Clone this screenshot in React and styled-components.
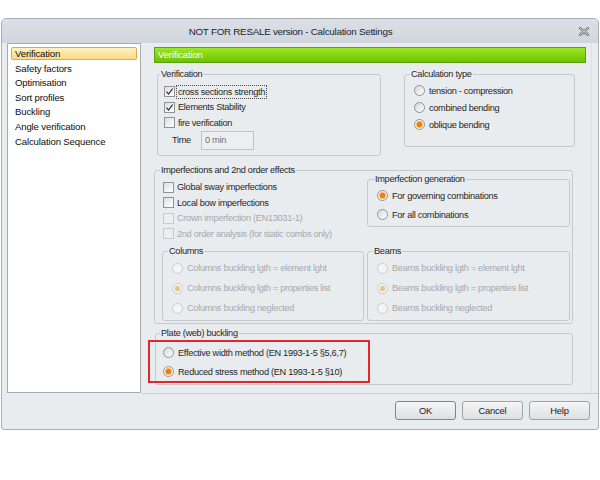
import React from "react";
import styled, { createGlobalStyle } from "styled-components";

const GlobalStyle = createGlobalStyle`
  html, body { margin: 0; padding: 0; background: #ffffff; }
  body {
    font-family: "Liberation Sans", Arial, sans-serif;
    color: #222;
  }
`;

const SIDE_ITEMS = [
  "Verification",
  "Safety factors",
  "Optimisation",
  "Sort profiles",
  "Buckling",
  "Angle verification",
  "Calculation Sequence",
];

const CheckItem = ({ checked, disabled, focus, children }) => (
  <Row $h={15.5}>
    <CheckBox $disabled={disabled}>
      {checked && (
        <svg width="9" height="9" viewBox="0 0 9 9">
          <path d="M1.5 4.6 L3.6 7 L7.6 1.6" fill="none" stroke="#2b2b2b" strokeWidth="1.1" />
        </svg>
      )}
    </CheckBox>
    <Label $disabled={disabled} $focus={focus}>{children}</Label>
  </Row>
);

const RadioItem = ({ checked, disabled, h = 19, children }) => (
  <Row $h={h}>
    <RadioDot $checked={checked} $disabled={disabled} />
    <Label $disabled={disabled}>{children}</Label>
  </Row>
);

const App = () => (
  <Page>
    <GlobalStyle />
    <Window>
      <TitleBar>
        <TitleText>NOT FOR RESALE version - Calculation Settings</TitleText>
        <CloseIcon width="10" height="9" viewBox="0 0 10 9">
          <path d="M1 1 L9 8 M9 1 L1 8" stroke="#6f757c" strokeWidth="2.6" strokeLinecap="round" />
          <path d="M1 1 L9 8 M9 1 L1 8" stroke="#eef0f3" strokeWidth="1" strokeLinecap="round" />
        </CloseIcon>
      </TitleBar>

      <Body>
        <Sidebar>
          {SIDE_ITEMS.map((item, i) => (
            <SideItem key={item} $active={i === 0}>{item}</SideItem>
          ))}
        </Sidebar>

        <Main>
          <Header>Verification</Header>

          <TopRow>
            <Group $w={224} $h={87}>
              <Legend $ml={2}>Verification</Legend>
              <GroupBody $pt={4} $pl={5}>
                <CheckItem checked focus>cross sections strength</CheckItem>
                <CheckItem checked>Elements Stability</CheckItem>
                <CheckItem>fire verification</CheckItem>
                <TimeRow>
                  <TimeLabel>Time</TimeLabel>
                  <TimeInput>0 min</TimeInput>
                </TimeRow>
              </GroupBody>
            </Group>

            <Group $w={171} $h={78}>
              <Legend>Calculation type</Legend>
              <GroupBody $pt={2} $pl={9}>
                <RadioItem h={17}>tension - compression</RadioItem>
                <RadioItem h={17}>combined bending</RadioItem>
                <RadioItem h={17} checked>oblique bending</RadioItem>
              </GroupBody>
            </Group>
          </TopRow>

          <Group $w={419} $h={159} $mt={9}>
            <Legend>Imperfections and 2nd order effects</Legend>
            <GroupBody $pl={7}>
              <SplitRow>
                <CheckColumn>
                  <CheckItem>Global sway imperfections</CheckItem>
                  <CheckItem>Local bow imperfections</CheckItem>
                  <CheckItem disabled>Crown imperfection (EN13031-1)</CheckItem>
                  <CheckItem disabled>2nd order analysis (for static combs only)</CheckItem>
                </CheckColumn>
                <Group $w={203} $h={53} $mt={-2}>
                  <Legend $ml={6}>Imperfection generation</Legend>
                  <GroupBody $pt={1} $pl={9}>
                    <RadioItem checked>For governing combinations</RadioItem>
                    <RadioItem>For all combinations</RadioItem>
                  </GroupBody>
                </Group>
              </SplitRow>

              <PairRow>
                <Group $w={202} $h={75}>
                  <Legend>Columns</Legend>
                  <GroupBody $pt={1} $pl={9}>
                    <RadioItem h={20} disabled>Columns buckling lgth = element lght</RadioItem>
                    <RadioItem h={20} disabled checked>Columns buckling lgth = properties list</RadioItem>
                    <RadioItem h={20} disabled>Columns buckling neglected</RadioItem>
                  </GroupBody>
                </Group>
                <Group $w={203} $h={75}>
                  <Legend>Beams</Legend>
                  <GroupBody $pt={1} $pl={9}>
                    <RadioItem h={20} disabled>Beams buckling lgth = element lght</RadioItem>
                    <RadioItem h={20} disabled checked>Beams buckling lgth = properties list</RadioItem>
                    <RadioItem h={20} disabled>Beams buckling neglected</RadioItem>
                  </GroupBody>
                </Group>
              </PairRow>
            </GroupBody>
          </Group>

          <Group $w={418} $h={57} $mt={4} $ml={1}>
            <Legend $ml={4}>Plate (web) buckling</Legend>
            <GroupBody>
              <Highlight>
                <RadioItem>Effective width method (EN 1993-1-5 §5,6,7)</RadioItem>
                <RadioItem checked>Reduced stress method (EN 1993-1-5 §10)</RadioItem>
              </Highlight>
            </GroupBody>
          </Group>
        </Main>
      </Body>

      <Footer>
        <Button $default>OK</Button>
        <Button>Cancel</Button>
        <Button>Help</Button>
      </Footer>
    </Window>
  </Page>
);

export default App;

const Page = styled.div`
  width: 600px;
  height: 480px;
  box-sizing: border-box;
  padding: 18px 0 0 1px;
`;

const Window = styled.div`
  width: 598px;
  height: 412px;
  box-sizing: border-box;
  border: 1px solid #a9afb7;
  border-radius: 5px 5px 3px 3px;
  background: #e9ecef;
  display: flex;
  flex-direction: column;
  overflow: hidden;
`;

const TitleBar = styled.div`
  height: 24px;
  flex: none;
  display: flex;
  align-items: center;
  background: linear-gradient(#dce0e6, #d0d5dc);
`;

const TitleText = styled.div`
  flex: 1;
  text-align: center;
  font-size: 9.8px;
  letter-spacing: -0.25px;
  color: #1b2230;
  padding-top: 1px;
`;

const CloseIcon = styled.svg`
  flex: none;
  margin: 1px 9px 0 0;
`;

const Body = styled.div`
  height: 350px;
  flex: none;
  display: flex;
`;

const Sidebar = styled.div`
  width: 134px;
  height: 350px;
  margin-left: 5px;
  box-sizing: border-box;
  border: 1px solid #a6abb2;
  background: #ffffff;
  padding: 3px;
`;

const SideItem = styled.div`
  height: 13px;
  box-sizing: border-box;
  margin-bottom: 1.6px;
  padding-left: 3px;
  border: 1px solid ${p => (p.$active ? "#e2a93f" : "transparent")};
  border-radius: 2px;
  background: ${p => (p.$active ? "linear-gradient(#fff1c4, #fdd983)" : "transparent")};
  font-size: 9.6px;
  letter-spacing: -0.15px;
  line-height: 11px;
  color: #0e0e0e;
  white-space: nowrap;
`;

const Main = styled.div`
  flex: 1;
  padding: 4px 0 0 13px;
  box-sizing: border-box;
  border-right: 1px solid #dde0e4;
  margin-right: 6px;
`;

const Header = styled.div`
  width: 432px;
  height: 16px;
  box-sizing: border-box;
  border: 1px solid #5a9f0c;
  background: linear-gradient(#9ce823, #6dc204);
  color: #ffffff;
  font-size: 9.4px;
  letter-spacing: -0.1px;
  line-height: 14px;
  padding-left: 3px;
`;

const TopRow = styled.div`
  display: flex;
  gap: 23px;
  margin-top: 6px;
  padding-left: 3px;
`;

const Group = styled.fieldset`
  margin: ${p => p.$mt || 0}px 0 0 ${p => p.$ml || 0}px;
  padding: 0;
  min-width: 0;
  box-sizing: border-box;
  width: ${p => p.$w}px;
  height: ${p => p.$h}px;
  border: 1px solid #c5cad0;
  border-radius: 3px;
  flex: none;
`;

const Legend = styled.legend`
  margin-left: ${p => (p.$ml === undefined ? 5 : p.$ml)}px;
  padding: 0 1px;
  font-size: 9.2px;
  letter-spacing: -0.3px;
  line-height: 11px;
  color: #1f1f1f;
`;

const GroupBody = styled.div`
  padding: ${p => p.$pt || 0}px 0 0 ${p => p.$pl || 0}px;
`;

const Row = styled.div`
  height: ${p => p.$h}px;
  display: flex;
  align-items: center;
  white-space: nowrap;
`;

const CheckBox = styled.span`
  width: 11px;
  height: 11px;
  flex: none;
  box-sizing: border-box;
  margin: 0 2px 0 1px;
  border: 1px solid ${p => (p.$disabled ? "#c6cacf" : "#8f9399")};
  background: ${p => (p.$disabled ? "#eceef1" : "linear-gradient(135deg, #dcdee1, #ffffff)")};
  display: flex;
  align-items: center;
  justify-content: center;
`;

const RadioDot = styled.span`
  width: 11px;
  height: 11px;
  flex: none;
  box-sizing: border-box;
  margin-right: 3px;
  border-radius: 50%;
  border: 1px solid ${p => (p.$disabled ? "#c9cdd1" : "#8f9399")};
  background: ${p =>
    p.$checked
      ? p.$disabled
        ? "radial-gradient(circle, #e6c48f 0 2.3px, #f4ece0 3px, #f7f7f7 4.5px)"
        : "radial-gradient(circle, #ee7f0c 0 2.4px, #f6c98b 3.2px, #ffffff 4.5px)"
      : p.$disabled
      ? "#f3f4f6"
      : "linear-gradient(135deg, #d4d6d9, #ffffff)"};
`;

const Label = styled.span`
  font-size: 9.2px;
  letter-spacing: -0.3px;
  line-height: 12px;
  color: ${p => (p.$disabled ? "#a4a8ad" : "#1f1f1f")};
  padding: 0 1px;
  outline: ${p => (p.$focus ? "1px dotted #4a4a4a" : "none")};
`;

const TimeRow = styled.div`
  height: 19px;
  display: flex;
  align-items: center;
  padding-left: 9px;
`;

const TimeLabel = styled.span`
  width: 29px;
  font-size: 9.2px;
  letter-spacing: -0.3px;
  color: #1f1f1f;
`;

const TimeInput = styled.div`
  width: 53px;
  height: 19px;
  box-sizing: border-box;
  border: 1px solid #bfc4ca;
  background: #eceef1;
  font-size: 9.2px;
  letter-spacing: -0.3px;
  line-height: 17px;
  padding-left: 3px;
  color: #6e7176;
`;

const SplitRow = styled.div`
  display: flex;
  align-items: flex-start;
`;

const CheckColumn = styled.div`
  width: 205px;
  flex: none;
  padding-top: 3.5px;
`;

const PairRow = styled.div`
  display: flex;
  gap: 3px;
  margin-top: 4.5px;
`;

const Highlight = styled.div`
  width: 222px;
  height: 43px;
  box-sizing: border-box;
  margin: 1px 0 0 -8px;
  border: 2px solid #e3262b;
  padding: 1px 0 0 13px;
`;

const Footer = styled.div`
  flex: 1;
  display: flex;
  justify-content: flex-end;
  align-items: flex-start;
  gap: 6px;
  border-top: 1px solid #c9cdd3;
  padding: 7px 8px 0 0;
  margin-left: 140px;
`;

const Button = styled.button`
  width: 61px;
  height: 19px;
  padding: 0;
  border: 1px solid ${p => (p.$default ? "#6f8aa3" : "#9ea3a9")};
  border-radius: 3px;
  background: linear-gradient(#f6f6f6, #dedfe1);
  font-family: inherit;
  font-size: 9.4px;
  letter-spacing: -0.2px;
  color: #222;
`;
